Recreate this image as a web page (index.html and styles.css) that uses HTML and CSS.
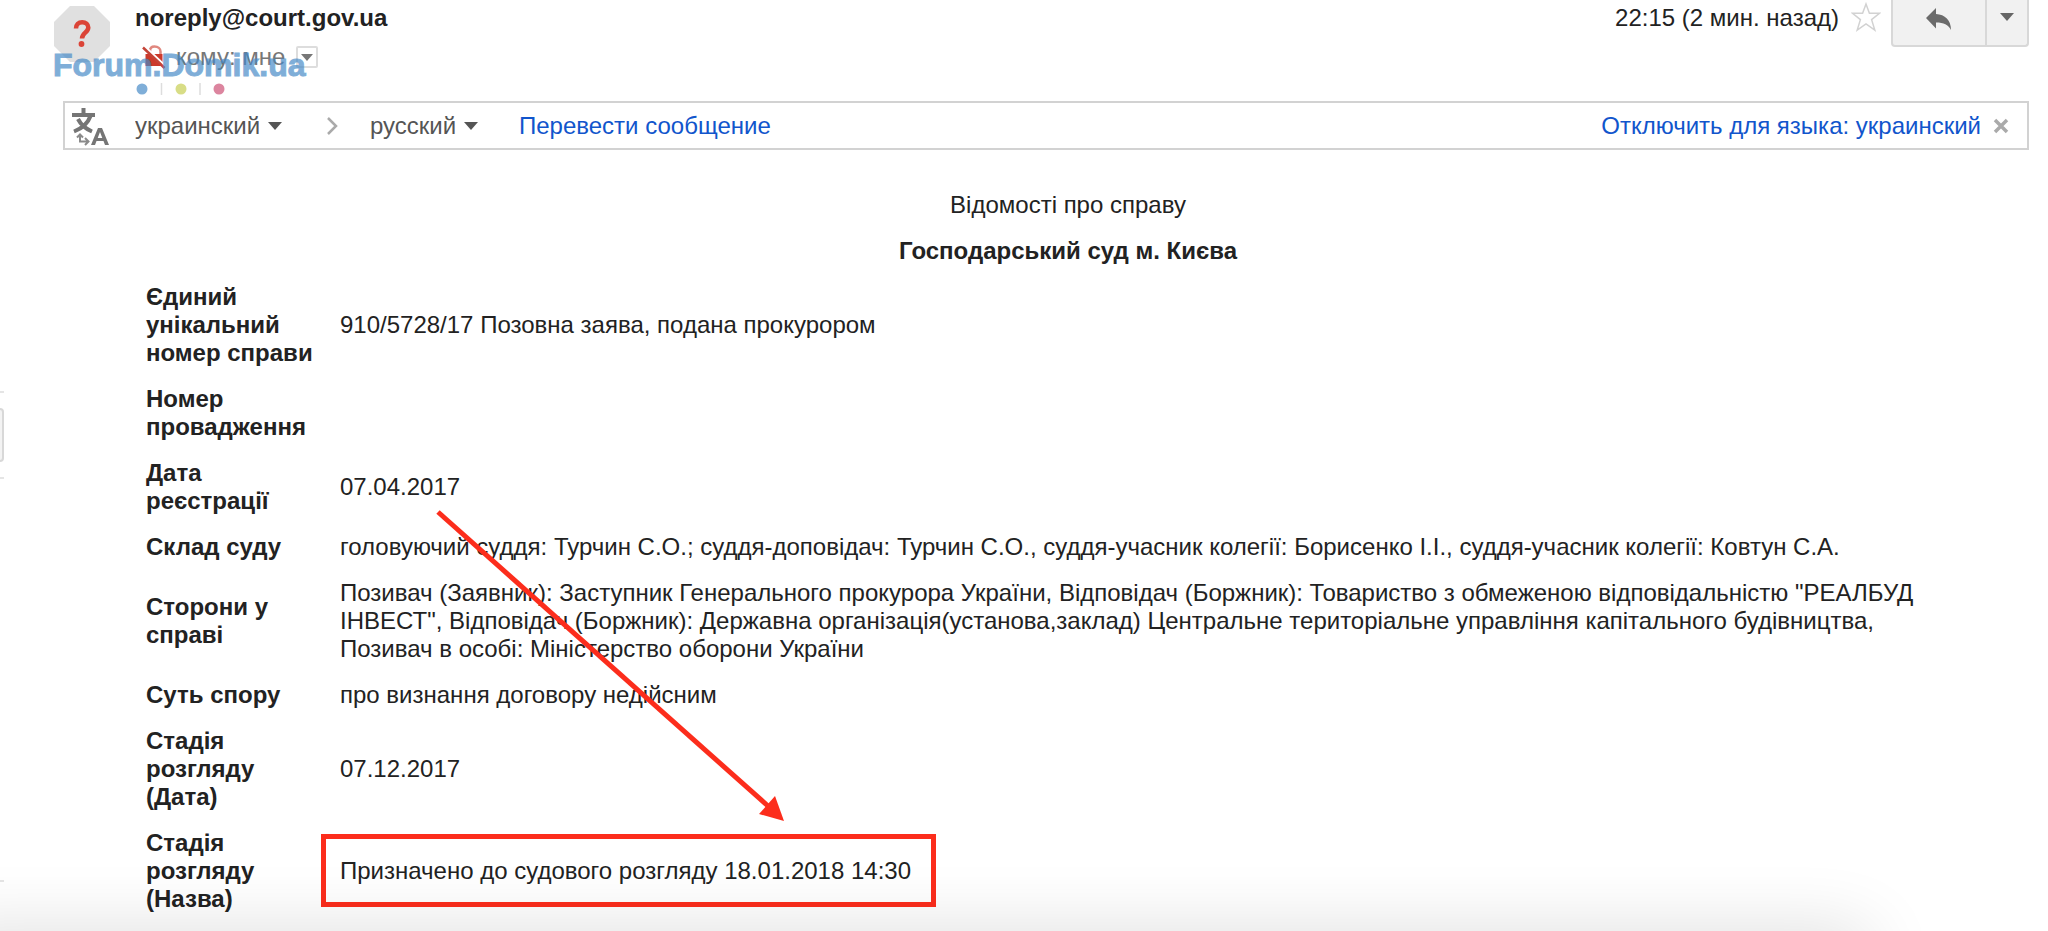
FILE: index.html
```
<!DOCTYPE html>
<html lang="ru">
<head>
    <meta charset="UTF-8">
    <meta name="viewport" content="width=device-width, initial-scale=1.0">
    <title>noreply@court.gov.ua</title>
    <link rel="stylesheet" href="styles.css">
</head>
<body>
    <!-- edge of the side panel -->
    <div class="side-edge">
        <span class="edge-line edge-line-top"></span>
        <span class="edge-button"></span>
        <span class="edge-line edge-line-middle"></span>
        <span class="edge-line edge-line-bottom"></span>
    </div>

    <header class="message-header">
        <svg class="avatar" viewBox="0 0 56 56">
            <path d="M16 0H40L56 16V40L40 56H16L0 40V16Z" fill="#e0e0e0"/>
            <path d="M22 22.500C22 18.500 24.500 16.200 28.200 16.200C31.800 16.200 34.300 18.300 34.300 21.500C34.300 26.500 28 27 28 32.500" fill="none" stroke="#db4437" stroke-width="4.500"/>
            <circle cx="27.500" cy="38" r="2.900" fill="#db4437"/>
        </svg>
        <div class="sender">
            <strong class="sender-name">noreply@court.gov.ua</strong>
            <div class="recipient">
                <svg class="lock" viewBox="0 0 24 24">
                    <path d="M8 9V6C8 3 10 1.500 12.500 1.500C16 1.500 18.500 3.500 18.500 6.500V10" fill="none" stroke="#e0877e" stroke-width="2.500"/>
                    <path d="M3.500 9H20.500V21H3.500Z" fill="#cc3a2b"/>
                    <path d="M3 1.500L24 21.500" stroke="#fff" stroke-width="2"/>
                    <path d="M1 2.500L22.500 23" stroke="#c44337" stroke-width="2.500"/>
                </svg>
                <span>кому: мне</span>
                <button class="details" type="button" aria-label="Показать детали">
                    <svg class="caret-small" viewBox="0 0 12 7"><path d="M0 0H12L6 7Z" fill="#777"/></svg>
                </button>
            </div>
        </div>
        <div class="header-actions">
            <span class="time">22:15 (2 мин. назад)</span>
            <button class="star" type="button" aria-label="Пометить">
                <svg viewBox="0 0 30 30"><path d="M15 2L18.400 11.300H28.500L20.600 17.600L23.800 28L15 21.800L6.200 28L9.400 17.600L1.500 11.300H11.600Z" fill="#fff" stroke="#d2d2d2" stroke-width="1.500"/></svg>
            </button>
            <div class="button-group">
                <button class="reply" type="button" aria-label="Ответить">
                    <svg viewBox="0 0 26 24"><path d="M0 10L10 0V6C19 6.500 25 12 25 22C22 16.500 18 14.500 10 14.500V20.500Z" fill="#6b6b6b"/></svg>
                </button>
                <button class="more" type="button" aria-label="Ещё">
                    <svg class="caret" viewBox="0 0 14 8"><path d="M0 0H14L7 8Z" fill="#666"/></svg>
                </button>
            </div>
        </div>
    </header>

    <div class="watermark">
        <span class="watermark-name">Forum.Domik.ua</span>
        <svg class="watermark-dots" viewBox="0 0 90 14">
            <circle cx="6" cy="7" r="5.500" fill="#7faed8"/>
            <path d="M25.500 1V13M64 1V13" stroke="#ddd" stroke-width="1.500"/>
            <circle cx="45" cy="7" r="5.500" fill="#d8dd86"/>
            <circle cx="83" cy="7" r="5.500" fill="#dc859f"/>
        </svg>
    </div>

    <div class="translate-bar">
        <svg class="translate-icon" viewBox="0 0 38 40">
            <path d="M0 9H23M11.500 2V9M18.500 10C16 17 11 22 2 25.500M6 13C9 19 13 22.500 20 25.500" fill="none" stroke="#757575" stroke-width="4"/>
            <path d="M8 28V35.500H16M13 32L16.500 35.500L13 39M5 31.500L8 28.500L11 31.500" fill="none" stroke="#8a8a8a" stroke-width="2"/>
            <path d="M19 39L26 22H30L37 39H33L31.500 35H24.500L23 39ZM25.700 32H30.300L28 26Z" fill="#757575" fill-rule="evenodd"/>
        </svg>
        <span class="language language-from">
            <select aria-label="Исходный язык"><option>украинский</option></select>
            <svg class="caret" viewBox="0 0 14 8"><path d="M0 0H14L7 8Z" fill="#555"/></svg>
        </span>
        <svg class="chevron" viewBox="0 0 12 18"><path d="M2 1L10 9L2 17" fill="none" stroke="#aaa" stroke-width="2.500"/></svg>
        <span class="language">
            <select aria-label="Язык перевода"><option>русский</option></select>
            <svg class="caret" viewBox="0 0 14 8"><path d="M0 0H14L7 8Z" fill="#555"/></svg>
        </span>
        <a class="translate-link" href="#">Перевести сообщение</a>
        <a class="disable-link" href="#">Отключить для языка: украинский</a>
        <button class="close" type="button" aria-label="Закрыть">
            <svg viewBox="0 0 16 16"><path d="M2 2L14 14M14 2L2 14" stroke="#aaa" stroke-width="3.500"/></svg>
        </button>
    </div>

    <main class="message-body" lang="uk">
        <table class="case">
            <tr><td class="title" colspan="2">Відомості про справу</td></tr>
            <tr><th class="title" colspan="2">Господарський суд м. Києва</th></tr>
            <tr>
                <th scope="row">Єдиний унікальний номер справи</th>
                <td>910/5728/17 Позовна заява, подана прокурором</td>
            </tr>
            <tr>
                <th scope="row">Номер провадження</th>
                <td></td>
            </tr>
            <tr>
                <th scope="row">Дата реєстрації</th>
                <td>07.04.2017</td>
            </tr>
            <tr>
                <th scope="row">Склад суду</th>
                <td>головуючий суддя: Турчин С.О.; суддя-доповідач: Турчин С.О., суддя-учасник колегії: Борисенко І.І., суддя-учасник колегії: Ковтун С.А.</td>
            </tr>
            <tr>
                <th scope="row">Сторони у справі</th>
                <td>Позивач (Заявник): Заступник Генерального прокурора України, Відповідач (Боржник): Товариство з обмеженою відповідальністю "РЕАЛБУД ІНВЕСТ", Відповідач (Боржник): Державна організація(установа,заклад) Центральне територіальне управління капітального будівництва, Позивач в особі: Міністерство оборони України</td>
            </tr>
            <tr>
                <th scope="row">Суть спору</th>
                <td>про визнання договору недійсним</td>
            </tr>
            <tr>
                <th scope="row">Стадія розгляду (Дата)</th>
                <td>07.12.2017</td>
            </tr>
            <tr>
                <th scope="row">Стадія розгляду (Назва)</th>
                <td><span class="highlight">Призначено до судового розгляду 18.01.2018 14:30</span></td>
            </tr>
        </table>
        <svg class="arrow" viewBox="0 0 350 312">
            <path d="M2 2L332 296" stroke="#fc2d1c" stroke-width="5"/>
            <path d="M348 311L323 304L339 286Z" fill="#fc2d1c"/>
        </svg>
    </main>

    <div class="bottom-shadow"></div>
</body>
</html>
```
FILE: styles.css
```
* {
    box-sizing: border-box;
}
html {
    height: 100%;
    overflow: hidden;
}
body {
    position: relative;
    min-height: 100%;
    margin: 0;
    padding: 0 19px 0 54px;
    background-color: #fff;
    color: #222;
    font-family: "Liberation Sans", Arial, sans-serif;
    font-size: 24px;
    line-height: 28px;
}
svg {
    display: block;
    flex: none;
}
button {
    display: flex;
    align-items: center;
    justify-content: center;
    padding: 0;
    border: none;
    background: none;
    cursor: pointer;
}
a {
    color: #15c;
    text-decoration: none;
}

/* header */
.message-header {
    display: flex;
    align-items: flex-start;
    height: 101px;
}
.avatar {
    width: 56px;
    height: 56px;
    margin-top: 6px;
}
.sender {
    margin-left: 25px;
    padding-top: 4px;
}
.sender-name {
    display: block;
}
.recipient {
    display: flex;
    align-items: center;
    margin-top: 11px;
    padding-left: 7px;
    color: #777;
}
.lock {
    width: 24px;
    height: 24px;
    margin-right: 10px;
}
.details {
    width: 22px;
    height: 22px;
    margin-left: 11px;
    border: 2px solid #ddd;
    border-radius: 2px;
}
.caret-small {
    width: 12px;
    height: 7px;
}
.caret {
    width: 14px;
    height: 8px;
}
.header-actions {
    display: flex;
    align-items: flex-start;
    margin-left: auto;
}
.time {
    padding-top: 4px;
}
.star {
    margin: 2px 10px 0 12px;
}
.star svg {
    width: 30px;
    height: 30px;
}
.button-group {
    display: flex;
    height: 47px;
    border: 2px solid #d8d8d8;
    border-top: none;
    border-radius: 0 0 4px 4px;
    background-color: #f1f1f1;
}
.reply {
    width: 92px;
    padding-bottom: 6px;
}
.reply svg {
    width: 26px;
    height: 24px;
}
.more {
    width: 42px;
    padding-bottom: 12px;
    border-left: 2px solid #d8d8d8;
}

/* site mark over the sender */
.watermark {
    position: absolute;
    top: 48px;
    left: 53px;
    font-size: 32px;
    font-weight: bold;
    line-height: 34px;
    pointer-events: none;
}
.watermark-name {
    display: block;
    color: #4388c6;
    opacity: 0.68;
    -webkit-text-stroke: 1px #4388c6;
}
.watermark-dots {
    width: 90px;
    height: 14px;
    margin-left: 83px;
}

/* translate bar */
.translate-bar {
    display: flex;
    align-items: center;
    height: 49px;
    margin-left: 9px;
    padding: 0 18px 0 7px;
    border: 2px solid #d2d2d2;
}
.translate-icon {
    width: 38px;
    height: 40px;
}
.language {
    display: flex;
    align-items: center;
    gap: 7px;
}
.language-from {
    margin-left: 25px;
}
.language select {
    padding: 0;
    border: none;
    background: none;
    color: #555;
    font: inherit;
    appearance: none;
}
.chevron {
    width: 12px;
    height: 18px;
    margin: 0 32px 0 44px;
}
.translate-link {
    margin-left: 41px;
}
.disable-link {
    margin-left: auto;
}
.close {
    margin-left: 12px;
}
.close svg {
    width: 16px;
    height: 16px;
}

/* message */
.message-body {
    position: relative;
    padding: 32px 30px 0 83px;
}
.case {
    width: 100%;
    border-collapse: collapse;
}
.case th,
.case td {
    padding: 9px;
    text-align: left;
    vertical-align: middle;
}
.case td {
    padding-right: 40px;
}
.case th {
    width: 194px;
}
.case .title {
    padding: 9px;
    text-align: center;
}
.highlight {
    padding: 4px 6px 4px 0;
    outline: 5px solid #fc2d1c;
    outline-offset: 14px;
}
.arrow {
    position: absolute;
    top: 360px;
    left: 382px;
    width: 350px;
    height: 312px;
}

/* window edges */
.side-edge {
    position: absolute;
    top: 0;
    left: 0;
    width: 4px;
    height: 100%;
}
.edge-line {
    position: absolute;
    left: 0;
    width: 4px;
    height: 2px;
    background-color: #e5e5e5;
}
.edge-line-top {
    top: 391px;
}
.edge-line-middle {
    top: 477px;
}
.edge-line-bottom {
    top: 880px;
}
.edge-button {
    position: absolute;
    top: 408px;
    left: 0;
    width: 4px;
    height: 54px;
    border: 2px solid #d8d8d8;
    border-left: none;
    border-radius: 0 4px 4px 0;
    background-color: #f3f3f3;
}
.bottom-shadow {
    position: fixed;
    right: 180px;
    bottom: -60px;
    left: -60px;
    height: 60px;
    box-shadow: 0 0 70px rgba(0, 0, 0, 0.14);
    pointer-events: none;
}
```
